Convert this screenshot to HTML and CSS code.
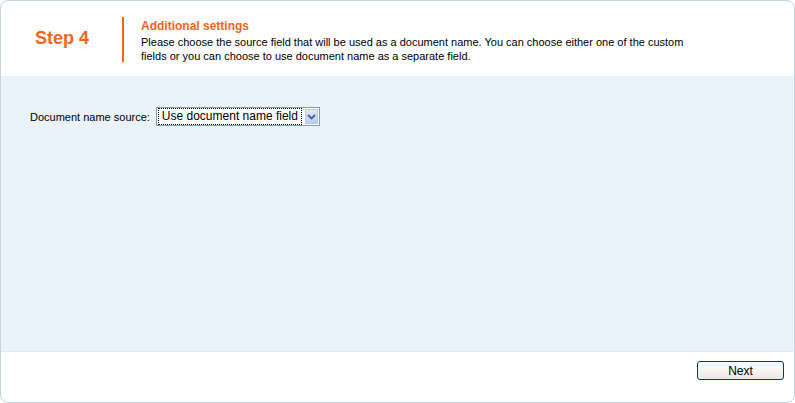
FILE: index.html
```html
<!DOCTYPE html>
<html lang="en">
<head>
  <meta charset="UTF-8">
  <title>Step 4 - Additional settings</title>
  <link rel="stylesheet" href="styles.css">
</head>
<body>

  <div class="wizard">
    <div class="wizard-header">
      <div class="step-number">Step 4</div>
      <div class="step-info">
        <div class="step-title">Additional settings</div>
        <div class="step-text">Please choose the source field that will be used as a document name. You can choose either one of the custom fields or you can choose to use document name as a separate field.</div>
      </div>
    </div>

    <div class="wizard-body">
      <div class="field-row">
        <label for="nameSource">Document name source:</label>
        <div class="select-box">
          <span class="select-value">Use document name field</span>
          <span class="select-arrow">
            <svg width="9" height="6" viewBox="0 0 9 6"><path d="M1 1 L4.5 4.5 L8 1" fill="none" stroke="#4d6185" stroke-width="1.8"/></svg>
          </span>
        </div>
      </div>
    </div>

    <div class="wizard-footer">
      <button class="next-btn">Next</button>
    </div>
  </div>

</body>
</html>
```

FILE: styles.css
```css
body {
  margin: 0;
  font-family: "Liberation Sans", Arial, sans-serif;
  background-color: #ffffff;
}

.wizard {
  width: 795px;
  height: 403px;
  box-sizing: border-box;
  border: 1px solid #c6d3dc;
  border-radius: 8px;
  display: flex;
  flex-direction: column;
  overflow: hidden;
  background-color: #ffffff;
}

.wizard-header {
  height: 75px;
  display: flex;
  align-items: flex-start;
  flex-shrink: 0;
}

.step-number {
  width: 87px;
  padding-left: 34px;
  padding-top: 27px;
  font-size: 18px;
  font-weight: bold;
  color: #f2661e;
}

.step-info {
  margin-top: 16px;
  border-left: 2px solid #f2661e;
  padding-left: 17px;
  height: 45px;
  width: 560px;
}

.step-title {
  font-size: 12px;
  font-weight: bold;
  color: #f2661e;
  margin-top: 1px;
  line-height: 16px;
}

.step-text {
  font-size: 11px;
  color: #000000;
  line-height: 14px;
  margin-top: 1px;
}

.wizard-body {
  flex: 1;
  background-color: #eaf3fa;
  border-bottom: 1px solid #dbe9f3;
  padding: 31px 29px;
}

.field-row {
  display: flex;
  align-items: center;
  font-size: 11px;
  color: #000000;
}

.field-row label {
  margin-right: 6px;
}

.select-box {
  display: flex;
  align-items: center;
  height: 19px;
  box-sizing: border-box;
  border: 1px solid #7f9db9;
  background-color: #ffffff;
  padding: 1px;
}

.select-value {
  font-size: 12px;
  padding: 0 3px;
  line-height: 15px;
  border: 1px dotted #000000;
}

.select-arrow {
  width: 13px;
  height: 15px;
  margin-left: 3px;
  background: linear-gradient(#dfe8fb, #b9cdf5);
  border: 1px solid #b8c8ec;
  box-sizing: border-box;
  display: flex;
  align-items: center;
  justify-content: center;
}

.wizard-footer {
  height: 50px;
  flex-shrink: 0;
  display: flex;
  justify-content: flex-end;
  align-items: flex-start;
  padding-right: 10px;
}

.next-btn {
  margin-top: 9px;
  width: 87px;
  height: 19px;
  font-family: "Liberation Sans", Arial, sans-serif;
  font-size: 12px;
  color: #000000;
  background: linear-gradient(#ffffff, #ece9e0);
  border: 1px solid #003c74;
  border-radius: 3px;
  padding: 0;
  cursor: pointer;
}
```
